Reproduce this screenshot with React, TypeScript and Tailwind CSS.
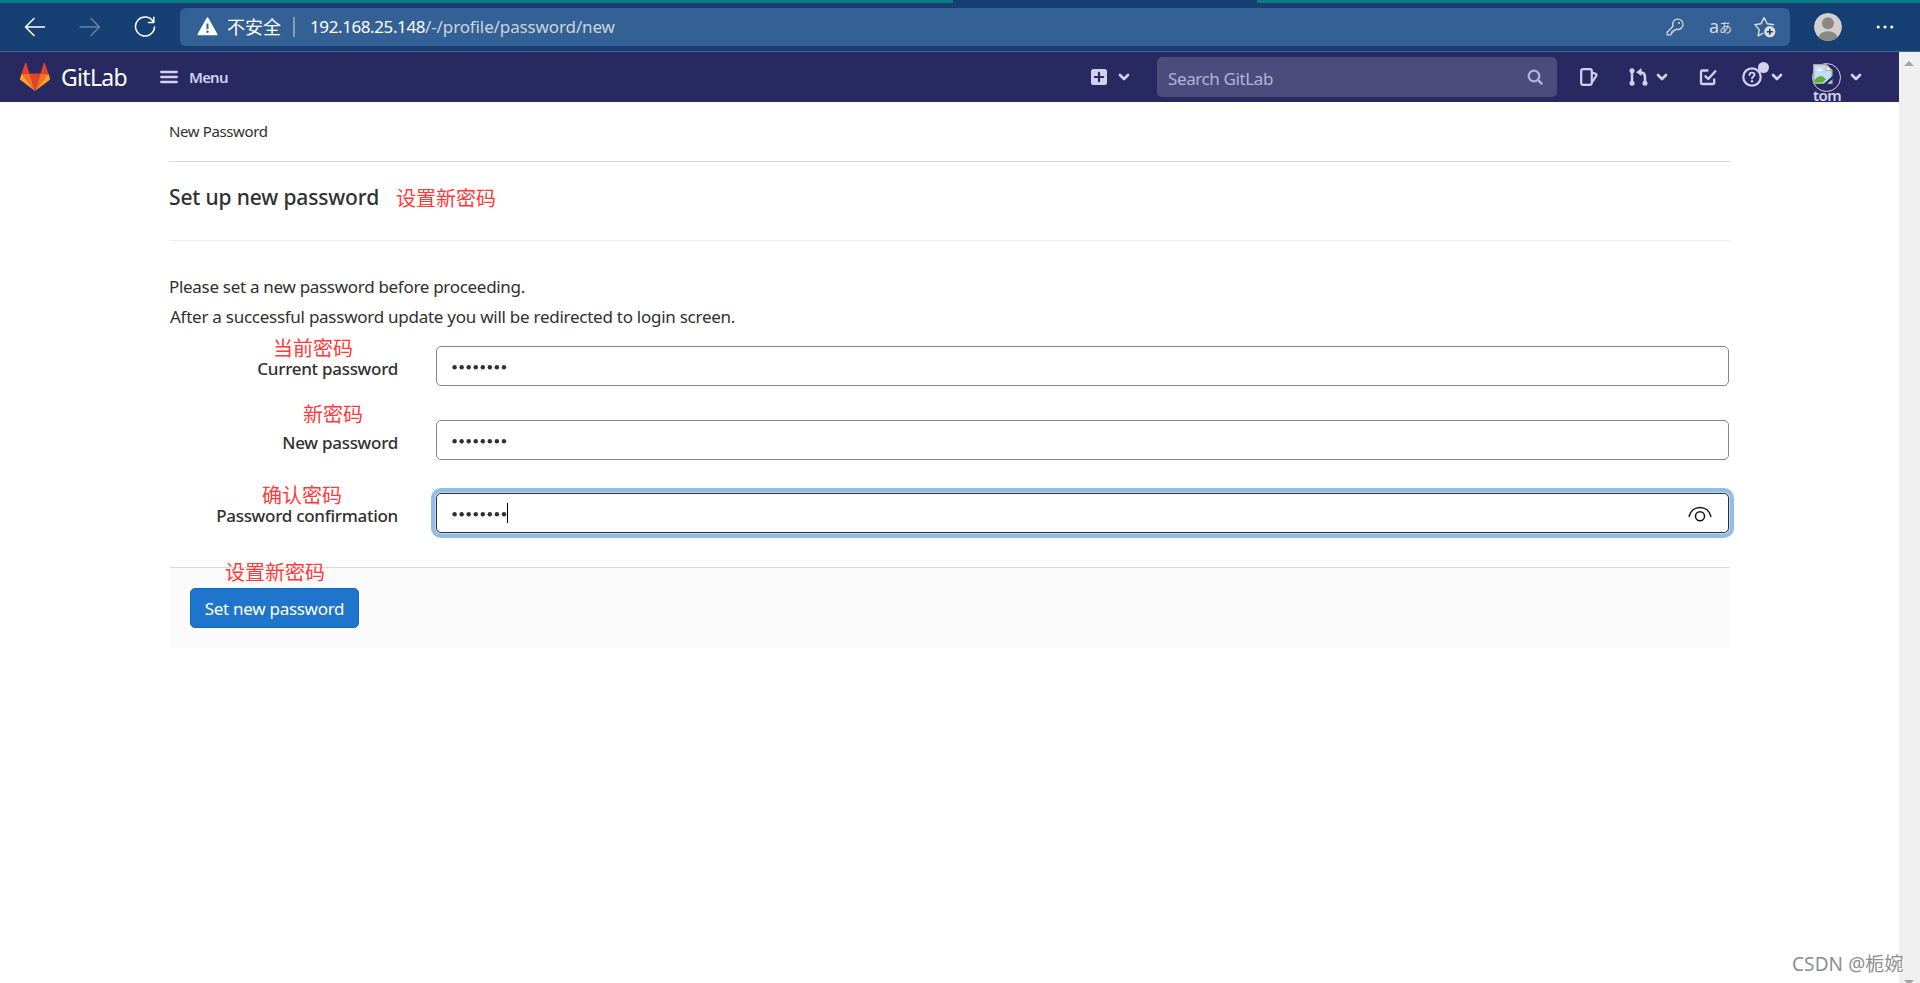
import React from "react";

type IconProps = { className?: string };

function Chevron({ className = "" }: IconProps) {
  return (
    <svg className={className} width="12" height="8" viewBox="0 0 12 8" fill="none" stroke="#d1d1f0" strokeWidth="2.6" strokeLinecap="round" strokeLinejoin="round">
      <path d="M2 2l4 4 4-4" />
    </svg>
  );
}

function BrowserBar() {
  return (
    <div className="flex h-12 shrink-0 items-center bg-[#163f73] pb-px">
      <div className="flex w-[180px] items-center gap-[33px] pl-[24px]">
        <svg width="22" height="20" viewBox="0 0 22 20" fill="none" stroke="#fff" strokeWidth="1.5" strokeLinecap="round" strokeLinejoin="round">
          <path d="M20.500 10H1.500M10 1.500L1.500 10l8.500 8.500" />
        </svg>
        <svg width="22" height="20" viewBox="0 0 22 20" fill="none" stroke="#6584aa" strokeWidth="1.5" strokeLinecap="round" strokeLinejoin="round">
          <path d="M1 10h19.500M12 1.500L20.500 10l-8.500 8.500" />
        </svg>
        <svg width="22" height="22" viewBox="0 0 22 22" fill="none" stroke="#fff" strokeWidth="1.5" strokeLinecap="round" strokeLinejoin="round">
          <path d="M19.500 6.200A9.500 9.500 0 1 0 20.500 11M19.800 1.200v5.300h-5.300" />
        </svg>
      </div>
      <div className="flex h-[38px] w-[1610px] items-center rounded-md bg-[#336196] pl-[17px] text-[17px] text-white">
        <svg width="21" height="19" viewBox="0 0 21 19">
          <path d="M10.500 1.200L19.700 17.400H1.300z" fill="#fff" stroke="#fff" strokeWidth="1.600" strokeLinejoin="round" />
          <path d="M10.500 6.500v5.500" stroke="#336196" strokeWidth="2" />
          <circle cx="10.500" cy="14.700" r="1.200" fill="#336196" />
        </svg>
        <span className="-mt-[2px] ml-[9px] w-[54px] whitespace-nowrap font-['Noto_Sans_CJK_SC',sans-serif] text-[18px] leading-none">不安全</span>
        <span className="ml-[12px] h-5 w-[2px] bg-[#819dbf]" />
        <span className="ml-[15px] whitespace-nowrap">
          <span className="tracking-[-0.4px]">192.168.25.148</span>
          <span className="tracking-[-0.12px] text-[#cdd3dc]">/-/profile/password/new</span>
        </span>
        <div className="ml-auto flex items-center pr-[14px]">
          <svg width="18" height="18" viewBox="0 0 18 18" fill="none" stroke="#d8d8d8" strokeWidth="1.300" strokeLinejoin="round">
            <path d="M7 8.200A5.200 5.200 0 1 1 10.200 11.200L9 12.300H7.300V14H5.600v1.700L4.400 16.900H1.200v-2.700z" />
            <circle cx="13" cy="5" r="1" fill="#d8d8d8" stroke="none" />
          </svg>
          <span className="ml-[25px] -mt-[2px] flex w-[22px] items-center whitespace-nowrap text-[#d8d8d8]">
            <span className="w-[10px] text-[18px] leading-none">a</span>
            <span className="mt-[2px] font-['Noto_Sans_CJK_JP',sans-serif] text-[13px] leading-none">あ</span>
          </span>
          <svg className="ml-[23px]" width="22" height="22" viewBox="0 0 22 22" fill="none" stroke="#e0e0e0" strokeWidth="1.400" strokeLinejoin="round">
            <path d="M9.500 17l-5.300 2.900 1-6.300L1 8.600l6-.9 3.200-6 3 6 6.800 1" />
            <circle cx="15.800" cy="15.700" r="5.600" fill="#e0e0e0" stroke="none" />
            <path d="M15.800 12.700v6M12.800 15.700h6" stroke="#163f73" strokeWidth="1.500" />
          </svg>
        </div>
      </div>
      <svg className="ml-6" width="28" height="28" viewBox="0 0 28 28">
        <defs>
          <clipPath id="face"><circle cx="14" cy="14" r="14" /></clipPath>
        </defs>
        <g clipPath="url(#face)">
          <circle cx="14" cy="14" r="14" fill="#d2d0ce" />
          <circle cx="14" cy="10.300" r="6" fill="#8a8785" />
          <ellipse cx="14" cy="25" rx="9.800" ry="6.800" fill="#8a8785" />
        </g>
      </svg>
      <svg className="ml-[34px]" width="18" height="4" viewBox="0 0 18 4" fill="#fff">
        <circle cx="2.200" cy="2" r="1.600" />
        <circle cx="9" cy="2" r="1.600" />
        <circle cx="15.800" cy="2" r="1.600" />
      </svg>
    </div>
  );
}

function NavBar() {
  return (
    <nav className="flex h-[50px] shrink-0 items-center bg-[#292961] text-[#d1d1f0]">
      <svg className="ml-[19px]" width="32" height="30" viewBox="0 0 32 30">
        <path d="M16 29L21.500 11.500h-11z" fill="#e24329" />
        <path d="M16 29L10.500 11.500H2.600z" fill="#fc6d26" />
        <path d="M2.600 11.500L1 16.700c-.2.500 0 1 .4 1.300L16 29z" fill="#fca326" />
        <path d="M2.600 11.500h7.900L7.200 1.300c-.2-.5-.9-.5-1.100 0z" fill="#e24329" />
        <path d="M16 29l5.500-17.500h7.900z" fill="#fc6d26" />
        <path d="M29.400 11.500l1.600 5.200c.2.500 0 1-.4 1.300L16 29z" fill="#fca326" />
        <path d="M29.400 11.500h-7.900l3.300-10.200c.2-.5.900-.5 1.100 0z" fill="#e24329" />
      </svg>
      <span className="ml-[10px] w-[67px] whitespace-nowrap text-[23px] leading-none tracking-[-0.7px] text-white">GitLab</span>
      <svg className="ml-[32px]" width="18" height="14" viewBox="0 0 18 14" stroke="#d1d1f0" strokeWidth="2.300" strokeLinecap="round">
        <path d="M1.200 2h15.600M1.200 7h15.600M1.200 12h15.600" />
      </svg>
      <span className="ml-[11px] text-[15px] font-semibold leading-none tracking-[-0.8px]">Menu</span>
      <div className="ml-auto flex items-center">
        <svg width="16" height="16" viewBox="0 0 16 16">
          <rect width="16" height="16" rx="2.500" fill="#d1d1f0" />
          <path d="M8 3.800v8.400M3.800 8h8.400" stroke="#292961" strokeWidth="2.200" strokeLinecap="round" />
        </svg>
        <Chevron className="ml-[11px]" />
        <div className="ml-[27px] flex h-10 w-[400px] items-center justify-between rounded-[5px] bg-[#4c4c7c] pl-[11px] pr-[14px]">
          <span className="pt-[3px] text-[17px] tracking-[-0.39px] text-[#b3b3d9]">Search GitLab</span>
          <svg width="16" height="16" viewBox="0 0 16 16" fill="none" stroke="#b3b3d9" strokeLinecap="round">
            <circle cx="7" cy="7" r="5.300" strokeWidth="2.200" />
            <path d="M11.200 11.200l3.300 3.300" strokeWidth="2.500" />
          </svg>
        </div>
        <svg className="ml-[23px]" width="18" height="18" viewBox="0 0 18 18" fill="none" stroke="#d1d1f0" strokeWidth="2.200" strokeLinejoin="round">
          <rect x="1.200" y="1.200" width="10.600" height="15.600" rx="2" />
          <path d="M12 4.500l3.600 1.300c.8.300 1.100 1 .8 1.800L12.300 14" />
        </svg>
        <svg className="ml-[31px]" width="19" height="18" viewBox="0 0 19 18" fill="none" stroke="#d1d1f0" strokeWidth="2.500">
          <path d="M3 3v12M16 15V9.500c0-3.500-1.500-5.200-5-5.200" />
          <path d="M12.500 0v8L7.200 4.200z" fill="#d1d1f0" stroke="none" />
          <circle cx="3" cy="2.800" r="2.500" fill="#d1d1f0" stroke="none" />
          <circle cx="3" cy="15.300" r="2.500" fill="#d1d1f0" stroke="none" />
          <circle cx="16" cy="15.300" r="2.500" fill="#d1d1f0" stroke="none" />
        </svg>
        <Chevron className="ml-[8px]" />
        <svg className="ml-[31px]" width="18" height="18" viewBox="0 0 18 18" fill="none" stroke="#d1d1f0" strokeWidth="2.300" strokeLinecap="round" strokeLinejoin="round">
          <path d="M8.500 2.500H3.500a1.500 1.500 0 0 0-1.500 1.500v10.500A1.500 1.500 0 0 0 3.500 16h10.200a1.500 1.500 0 0 0 1.500-1.500V11.500" />
          <path d="M6.500 8.300l2.800 2.700 7-7.800" />
        </svg>
        <span className="relative ml-[25px] h-5 w-5">
          <svg width="20" height="20" viewBox="0 0 20 20" fill="none" stroke="#d1d1f0" strokeWidth="2.200" strokeLinecap="round">
            <circle cx="10" cy="10" r="8.700" />
            <path d="M7.500 8c0-1.600 1.100-2.400 2.500-2.400s2.500.9 2.500 2.200c0 1.600-2.500 1.800-2.500 3.600" strokeWidth="1.900" />
            <circle cx="10" cy="14.200" r="1.200" fill="#d1d1f0" stroke="none" />
          </svg>
          <span className="absolute -top-[5px] left-[16px] h-[11px] w-[11px] rounded-full bg-[#d1d1f0]" />
        </span>
        <Chevron className="ml-[9px]" />
        <span className="relative ml-[29px] h-[29px] w-[29px] rounded-full border border-[#d1d1f0]">
          <svg className="absolute left-0 top-0" width="20" height="20" viewBox="0 0 20 20">
            <path d="M.7.7h12.500L19 6.500v12.800H.7z" fill="#c3dcf8" stroke="#a8a8a0" strokeWidth="1.300" />
            <path d="M13.200.7L19 6.500h-5.800z" fill="#fff" stroke="#a8a8a0" strokeWidth="1" />
            <path d="M3.500 6.800c0-1.500 1.500-2 2.300-1.300.8-1.200 3-.8 3 1.300z" fill="#fff" />
            <path d="M1.400 18.600v-2c2-3 4-4.600 6.300-4.600 2.200 0 3.500 1.300 5.300 3.500l-3.600 3.100z" fill="#5ab036" />
            <path d="M10.500 20L20 11.500v3.300L14 20z" fill="#292961" />
          </svg>
          <span className="absolute left-0 top-[24px] text-[15px] font-semibold leading-none tracking-[-0.5px]">tom</span>
        </span>
        <Chevron className="ml-[9px] mr-[37px]" />
      </div>
    </nav>
  );
}

function Note({ className, children }: { className: string; children: string }) {
  return (
    <span className={`absolute whitespace-nowrap font-['Noto_Sans_CJK_SC',sans-serif] text-[20px] leading-none text-[#ff3a3a] ${className}`}>
      {children}
    </span>
  );
}

function Dots() {
  return (
    <svg className="ml-px mt-px" width="57" height="6" viewBox="0 0 57 6" fill="#303030">
      {[0, 1, 2, 3, 4, 5, 6, 7].map((i) => (
        <circle key={i} cx={2.6 + i * 7.05} cy="3.2" r="2.2" />
      ))}
    </svg>
  );
}

function Field({ label, note, noteClass, focused = false }: { label: string; note: string; noteClass: string; focused?: boolean }) {
  return (
    <div className="relative flex h-10 items-center">
      <span className="w-[229px] whitespace-nowrap pr-px pt-[5px] text-right text-[17px] font-medium leading-[17px] tracking-[-0.28px]">{label}</span>
      <Note className={noteClass}>{note}</Note>
      <div
        className={
          focused
            ? "ml-[37px] flex h-10 w-[1293px] items-center rounded-[5px] border border-[#303030] px-[14px] shadow-[0_0_0_1px_#c3d9f1,0_0_0_5px_#93bce6]"
            : "ml-[37px] flex h-10 w-[1293px] items-center rounded-[5px] border border-[#868686] px-[14px]"
        }
      >
        <Dots />
        {focused && <span className="-ml-[2px] h-5 w-px bg-black" />}
        {focused && (
          <svg className="ml-auto mr-[2px] mt-[2px]" width="24" height="16" viewBox="0 0 24 16" fill="none" stroke="#111" strokeWidth="1.500" strokeLinecap="round">
            <path d="M1.200 10.200C2.500 4.800 6.800 1.400 12 1.400s9.500 3.400 10.800 8.800" />
            <circle cx="12" cy="10.300" r="4.500" />
          </svg>
        )}
      </div>
    </div>
  );
}

function Content() {
  return (
    <main className="ml-[170px] flex w-[1560px] flex-col text-[#303030]">
      <div className="-ml-px flex h-[60px] items-center border-b border-[#dbdbdb] text-[15px] tracking-[-0.38px]">New Password</div>
      <div className="relative flex h-[79px] items-center border-b border-[#eeeeee] pb-[6px]">
        <h1 className="-ml-px text-[21px] font-medium tracking-[-0.14px]">Set up new password</h1>
        <Note className="left-[226px] top-[26px]">设置新密码</Note>
      </div>
      <p className="-ml-px mt-[31px] h-[30px] text-[17px] leading-[30px] tracking-[-0.3px]">Please set a new password before proceeding.</p>
      <p className="h-[30px] text-[17px] leading-[30px] tracking-[-0.26px]">
        After a successful password update you will be redirected to login screen.
      </p>
      <div className="mt-[14px] flex flex-col">
        <Field label="Current password" note="当前密码" noteClass="left-[103px] -top-[8px]" />
        <div className="mt-[34px]">
          <Field label="New password" note="新密码" noteClass="left-[133px] -top-[16px]" />
        </div>
        <div className="mt-[33px]">
          <Field label="Password confirmation" note="确认密码" noteClass="left-[92px] -top-[8px]" focused />
        </div>
      </div>
      <div className="relative mt-[34px] h-[81px] border-t border-[#dbdbdb] bg-[#fafafa] pl-5 pt-5">
        <button className="h-10 w-[169px] rounded-[5px] border border-[#1068bf] bg-[#1f75cb] text-[17px] leading-none tracking-[-0.28px] text-white">
          Set new password
        </button>
        <Note className="left-[55px] -top-[6px]">设置新密码</Note>
      </div>
    </main>
  );
}

export default function App() {
  return (
    <div className="relative flex h-[983px] w-[1920px] flex-col overflow-hidden bg-white font-['Noto_Sans','Noto_Sans_CJK_SC',sans-serif]">
      <div className="flex h-[3px] shrink-0 bg-[#0b7c85]">
        <span className="ml-[953px] w-[304px] bg-[#163f73]" />
      </div>
      <BrowserBar />
      <div className="h-px shrink-0 bg-[#456591]" />
      <div className="flex min-h-0 flex-1">
        <div className="flex w-[1899px] flex-col">
          <NavBar />
          <Content />
        </div>
        <div className="flex w-[21px] flex-col items-center justify-between bg-[#f0f0f0] pt-[9px]">
          <svg className="-ml-px" width="10" height="5" viewBox="0 0 10 5"><path d="M5 0l5 5H0z" fill="#a3a3a3" /></svg>
          <svg className="-ml-px" width="10" height="3" viewBox="0 0 10 3"><path d="M0 0h10L7 3H3z" fill="#a3a3a3" /></svg>
        </div>
      </div>
      <span className="absolute left-[1792px] top-[955px] whitespace-nowrap text-[19px] leading-none tracking-[0.1px] text-[#8e8e8e] [text-shadow:1px_1px_0_#ffffff]">
        CSDN @栀婉
      </span>
    </div>
  );
}
